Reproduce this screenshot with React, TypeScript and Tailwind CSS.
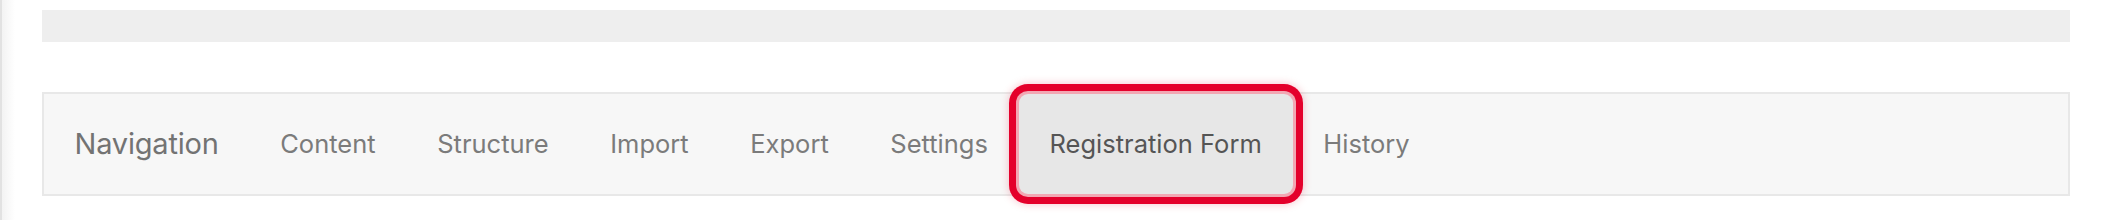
import React from "react";

const tabs = ["Content", "Structure", "Import", "Export", "Settings", "Registration Form", "History"];

export default function App() {
  return (
    <div className="flex h-[220px] w-[2110px] bg-white" style={{ fontFamily: "Inter, 'Noto Sans', sans-serif" }}>
      <div className="w-[2px] shrink-0 bg-[#e2e2e2]" />
      <div className="w-[13px] shrink-0 bg-gradient-to-r from-[#f3f3f3] to-white" />
      <div className="ml-[27px] mr-[40px] flex flex-1 flex-col pt-[10px]">
        <div className="h-[32px] bg-[#eeeeee]" />
        <div className="mt-[50px] flex h-[104px] items-stretch border-2 border-[#e8e8e8] bg-[#f7f7f7] pl-[30.5px]">
          <div className="flex items-center pr-[30.8px] text-[29px] tracking-[-0.2px] text-[#737373]">Navigation</div>
          {tabs.map((t) =>
            t === "Registration Form" ? (
              <div
                key={t}
                className="flex items-center rounded-[9px] bg-[#e7e7e7] px-[30.8px] text-[25.5px] text-[#555555] shadow-[0_0_0_3px_#f2a7b3,0_0_0_10px_#e4002b,0_0_8px_10px_rgba(228,0,43,0.25)]"
              >
                {t}
              </div>
            ) : (
              <div key={t} className="flex items-center px-[30.8px] text-[25.5px] text-[#7b7b7b]">
                {t}
              </div>
            )
          )}
        </div>
      </div>
    </div>
  );
}
